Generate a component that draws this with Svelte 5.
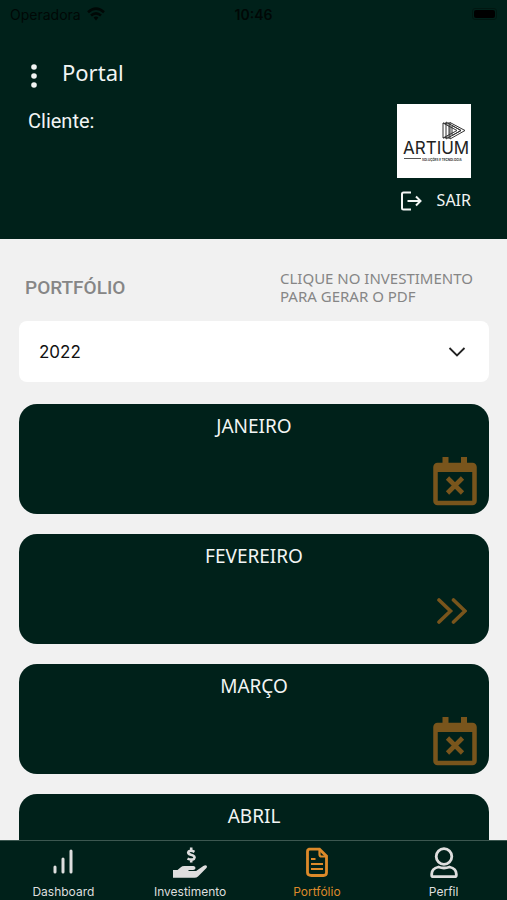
<script lang="ts">
  let year = $state('2022')

  const years = ['2022', '2021', '2020']

  const months = [
    { name: 'JANEIRO', closed: true },
    { name: 'FEVEREIRO', closed: false },
    { name: 'MARÇO', closed: true },
    { name: 'ABRIL', closed: true },
  ]

  const tabs = ['Dashboard', 'Investimento', 'Portfólio', 'Perfil']
  let current = 'Portfólio'
</script>

<div class="app">
  <header>
    <div class="status">
      <span class="carrier">
        Operadora
        <svg width="18" height="14" viewBox="0 0 18 14" fill="none" stroke="currentColor" stroke-width="2.6">
          <path d="M1 5.2Q9-1.8 17 5.2" />
          <path d="M4 8.6Q9 4.2 14 8.6" />
          <path d="M6.6 10.6Q9 8.6 11.4 10.6L9 13.4z" fill="currentColor" stroke="none" />
        </svg>
      </span>
      <span class="clock">10:46</span>
      <span class="battery"><i></i></span>
    </div>
    <div class="title">
      <button class="menu" aria-label="Menu">
        <svg width="8" height="26" viewBox="0 0 8 26" fill="currentColor">
          <circle cx="4" cy="4" r="2.8" />
          <circle cx="4" cy="13" r="2.8" />
          <circle cx="4" cy="22" r="2.8" />
        </svg>
      </button>
      <h1>Portal</h1>
    </div>
    <div class="client">
      <p>Cliente:</p>
      <div class="account">
        <svg class="logo" width="74" height="74" viewBox="0 0 74 74" role="img" aria-label="Artium">
          <rect width="74" height="74" fill="#fff" />
          <g fill="none" stroke="#333" stroke-width="1">
            <path d="M46 19v15M49 18v17M52 18v17M46 19l5 1M46 34l5-1" />
            <path d="M53 18.500l15 8-15 8.500z" />
            <path d="M49 18l15 8.500-15 8.500M55 21.500v10l9-5z" />
            <path d="M46 19l14 7.500-14 7.500" />
          </g>
          <text class="brand" x="6" y="50">ARTIUM</text>
          <path d="M7 54.500h17" stroke="#555" stroke-width="1" />
          <text class="tagline" x="25" y="57">SOLUÇÕES E TECNOLOGIA</text>
        </svg>
        <button class="logout">
          <svg width="22" height="20" viewBox="0 0 22 20" fill="none" stroke="currentColor" stroke-width="2">
            <path d="M11 1.500H3.500Q2 1.500 2 3v14q0 1.500 1.500 1.500H11" />
            <path d="M7.500 10H20M16 5.500l4.500 4.500-4.500 4.500" />
          </svg>
          SAIR
        </button>
      </div>
    </div>
  </header>

  <main>
    <div class="heading">
      <h2>PORTFÓLIO</h2>
      <p>CLIQUE NO INVESTIMENTO PARA GERAR O PDF</p>
    </div>

    <div class="year">
      <select bind:value={year} aria-label="Ano">
        {#each years as y (y)}
          <option value={y}>{y}</option>
        {/each}
      </select>
      <svg width="18" height="10" viewBox="0 0 18 10" fill="none" stroke="#222" stroke-width="1.800">
        <path d="M1.500 1L9 8.500 16.500 1" />
      </svg>
    </div>

    {#each months as month (month.name)}
      <button class="month">
        <span>{month.name}</span>
        {#if month.closed}
          <svg width="44" height="50" viewBox="0 0 44 50" fill="none" stroke="currentColor">
            <path d="M12.500 1v8M31 1v8" stroke-width="6" />
            <rect x="2.500" y="9" width="39" height="38" rx="2" stroke-width="4.500" />
            <path d="M2 12h40" stroke-width="8" />
            <path d="M14.500 22l15 15M29.500 22l-15 15" stroke-width="4.600" />
          </svg>
        {:else}
          <svg class="open" width="30" height="26" viewBox="0 0 30 26" fill="none" stroke="currentColor" stroke-width="3.600" stroke-linecap="round">
            <path d="M2 2l11.500 11L2 24M16.500 2L28 13 16.500 24" />
          </svg>
        {/if}
      </button>
    {/each}
  </main>

  <nav>
    {#each tabs as tab (tab)}
      <a href="#{tab}" class:active={tab === current}>
        <svg width="36" height="32" viewBox="0 0 36 32" fill="none" stroke="currentColor" stroke-width="2.800">
          {#if tab === 'Dashboard'}
            <path d="M10 20v5M18 12v13M26 4v21" stroke-width="3" stroke-linecap="round" />
          {:else if tab === 'Investimento'}
            <path d="M22.500 4.800Q19 3 16.800 4.300 14.800 6.500 19 7.800 24 9.200 22 11.800 19.500 13.400 15.500 11.600M19.200 .5v3M19.200 12.500v3" stroke-width="2.600" />
            <path d="M1 23h4.500l3-2.600q1.600-1.400 3.800-1.400h9.200q2.200.2 2 2.200-.4 1.800-2.400 1.800h-4.600v1h7.600l7.200-5q2.200-1.400 3.400-.2.900 1.100-.5 2.400l-8.200 8.300q-1.400 1.300-3.400 1.300H1z" fill="currentColor" stroke="none" />
          {:else if tab === 'Portfólio'}
            <path d="M9.500 2.200h11l7 7v16.300q0 3-3 3h-12q-4 0-4-3V4.500q0-2.300 2.500-2.300z" />
            <path d="M20.500 2.500v5q0 2 2 2h4.500M12 12h4.500M12 17h12M12 22h12" stroke-width="2.200" />
          {:else}
            <circle cx="18" cy="9.500" r="7.800" />
            <path d="M12.500 20q-6.800 1.500-6.800 7v1.200q0 1.400 1.400 1.400h21.800q1.400 0 1.400-1.400v-1.200q0-5.500-6.800-7-5.500 2-11 0z" />
          {/if}
        </svg>
        {tab}
      </a>
    {/each}
  </nav>
</div>

<style>
  :global(body) {
    margin: 0;
    background: #f1f1f1;
  }

  .app {
    height: 100vh;
    display: flex;
    flex-direction: column;
    font-family: "Noto Sans", "Open Sans", sans-serif;
  }

  button {
    font: inherit;
    color: inherit;
    background: none;
    border: 0;
    padding: 0;
    cursor: pointer;
  }

  h1,
  h2,
  p {
    margin: 0;
    font-weight: 400;
  }

  svg {
    display: block;
    flex: none;
  }

  header {
    background: #00211a;
    color: #f2f5f4;
    padding-bottom: 27px;
  }

  .status {
    display: grid;
    grid-template-columns: 1fr auto 1fr;
    align-items: center;
    height: 28px;
    padding: 0 10px;
    color: #000806;
    font: 14px Inter, sans-serif;
  }

  .carrier {
    display: flex;
    align-items: center;
    gap: 6px;
  }

  .clock {
    font-weight: 600;
  }

  .battery {
    justify-self: end;
    border: 1px solid #001711;
    border-radius: 3px;
    padding: 1px;
  }

  .battery i {
    display: block;
    width: 21px;
    height: 8px;
    border-radius: 2px;
    background: #000;
  }

  .title {
    display: flex;
    align-items: center;
    gap: 24px;
    height: 44px;
    padding: 22px 30px 10px;
  }

  .menu {
    padding-top: 8px;
  }

  h1 {
    font-size: 22px;
  }

  .client {
    display: flex;
    justify-content: space-between;
    padding: 0 36px 0 28px;
  }

  .client p {
    font: 20px/34px Roboto, sans-serif;
  }

  .account {
    display: flex;
    flex-direction: column;
    gap: 11px;
  }

  .brand {
    font: 17px Inter, sans-serif;
    fill: #222;
  }

  .tagline {
    font: 700 3px Inter, sans-serif;
    fill: #333;
  }

  .logout {
    display: flex;
    align-items: center;
    justify-content: space-between;
    font-size: 16px;
    line-height: 23px;
    padding-left: 3px;
  }

  main {
    flex: 1;
    min-height: 0;
    overflow: hidden;
    display: flex;
    flex-direction: column;
    gap: 20px;
    padding: 30px 18px 0 19px;
  }

  .heading {
    display: flex;
    align-items: center;
    justify-content: space-between;
    padding: 0 6px;
    color: #868686;
    margin-bottom: -4px;
  }

  h2 {
    font: 500 19px Roboto, sans-serif;
  }

  .heading p {
    width: 203px;
    font-size: 15px;
    line-height: 18px;
  }

  .year {
    position: relative;
    margin-bottom: 2px;
  }

  select {
    display: block;
    width: 100%;
    height: 61px;
    padding: 0 20px;
    border: 0;
    border-radius: 8px;
    appearance: none;
    background: #fff;
    color: #111;
    font: 17px Inter, sans-serif;
  }

  .year svg {
    position: absolute;
    right: 23px;
    top: 26px;
    pointer-events: none;
  }

  .month {
    flex: none;
    display: flex;
    flex-direction: column;
    justify-content: space-between;
    height: 110px;
    padding: 10px 12px 8px;
    border-radius: 18px;
    background: #00211a;
    color: #79551c;
  }

  .month span {
    align-self: center;
    color: #f2f5f4;
    font-size: 19px;
    line-height: 24px;
  }

  .month svg {
    align-self: flex-end;
  }

  .month .open {
    margin: 0 10px 12px;
  }

  nav {
    flex: none;
    display: grid;
    grid-template-columns: repeat(4, 1fr);
    height: 59px;
    border-top: 1px solid #3c5750;
    background: #00211a;
  }

  nav a {
    display: flex;
    flex-direction: column;
    align-items: center;
    gap: 5px;
    padding-top: 6px;
    color: #dedede;
    font: 12px/16px Inter, sans-serif;
    text-decoration: none;
  }

  nav .active {
    color: #dd8a2a;
  }
</style>
